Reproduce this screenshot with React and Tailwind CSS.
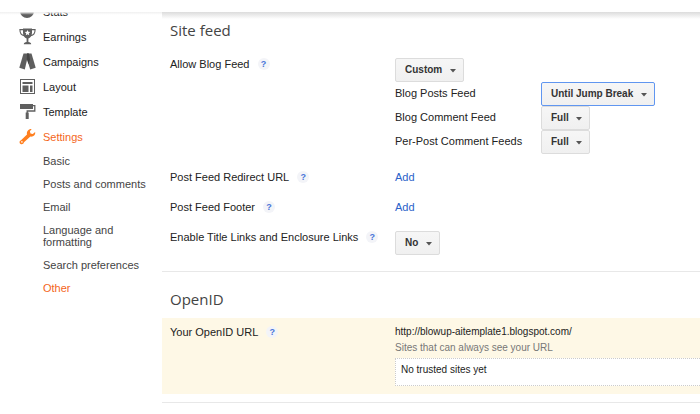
import React from "react";

const stroke = "#5f5f5f";

function StatsIcon() {
  return (
    <svg viewBox="0 0 17 17" className="h-[17px] w-[17px]" aria-hidden="true">
      <circle cx="8" cy="8" r="7" fill={stroke} />
    </svg>
  );
}

function TrophyIcon() {
  return (
    <svg viewBox="0 0 17 17" className="h-[17px] w-[17px]" aria-hidden="true">
      <path d="M4 .5h9v4.2c0 3-1.6 5.2-3.6 5.8v3.6c1.6.2 2.8.9 2.8 2.1H4.800c0-1.200 1.200-1.900 2.800-2.100v-3.600C5.600 9.900 4 7.700 4 4.700z" fill={stroke} />
      <path d="M4 1.600H.9c0 3.600 1.500 5.700 4.300 6M13 1.600h3.100c0 3.600-1.500 5.700-4.300 6" fill="none" stroke={stroke} strokeWidth="1.100" />
      <path d="M8.500 2l.8 1.800 2 .2-1.500 1.300.4 2-1.700-1-1.700 1 .4-2L5.700 4l2-.2z" fill="#fff" />
    </svg>
  );
}

function CampaignsIcon() {
  return (
    <svg viewBox="0 0 17 17" className="h-[17px] w-[17px]" aria-hidden="true">
      <path d="M4.500.5h5L5.800 16.500.3 14.800z" fill="#5f5f5f" />
      <path d="M8 .5h4.500l4.200 14.300-5.500 1.700L7.800 5z" fill="#5f5f5f" />
      <path d="M8 .5h2l1 6-1.500 5L7.800 6z" fill="#444" />
    </svg>
  );
}

function LayoutIcon() {
  return (
    <svg viewBox="0 0 17 17" className="h-[17px] w-[17px]" aria-hidden="true">
      <rect x="1.500" y="1.500" width="14" height="14" fill="#fff" stroke={stroke} />
      <path d="M3.500 4h10v2h-10zM3.500 7.500h6V14h-6zM11 7.500h2.500V14H11z" fill={stroke} />
    </svg>
  );
}

function RollerIcon() {
  return (
    <svg viewBox="0 0 17 17" className="h-[17px] w-[17px]" aria-hidden="true">
      <rect x="1" y="1" width="13" height="5" fill={stroke} />
      <path d="M14 2.700h1.800V8H8.200v3" fill="none" stroke={stroke} strokeWidth="1.300" />
      <rect x="6.700" y="9.500" width="3" height="6.500" fill={stroke} />
    </svg>
  );
}

function WrenchIcon() {
  return (
    <svg viewBox="0 0 17 17" className="h-[17px] w-[17px]" aria-hidden="true">
      <path
        d="M12.700.9 10.900 3.300l.6 2.300 2.300.4 2.300-1.900c.6 2.500-1.300 4.800-4.700 4.500L5 14.200c-.3 1.600-2 2.500-3.400 1.700s-1.600-3 .4-3.700l6-5.600C7.300 3.400 9.500.6 12.700.9z"
        fill="#ff7f1f"
      />
      <circle cx="2.900" cy="13.900" r=".8" fill="#fff" />
    </svg>
  );
}

const navItems = [
  { label: "Stats", Icon: StatsIcon },
  { label: "Earnings", Icon: TrophyIcon },
  { label: "Campaigns", Icon: CampaignsIcon },
  { label: "Layout", Icon: LayoutIcon },
  { label: "Template", Icon: RollerIcon },
  { label: "Settings", Icon: WrenchIcon, active: true },
];

const subItems = ["Basic", "Posts and comments", "Email", "Language and formatting", "Search preferences", "Other"];

function Sidebar() {
  return (
    <nav className="-mt-px w-[162px] shrink-0">
      <ul>
        {navItems.map(({ label, Icon, active }) => (
          <li key={label}>
            <a href="#" className={`flex h-[25px] items-center gap-[7px] pl-[19px] ${active ? "text-[#f4661b]" : "text-[#222]"}`}>
              <Icon />
              {label}
            </a>
          </li>
        ))}
      </ul>
      <ul className="flex flex-col gap-[11px] pt-[6px] pr-3 pl-[43px] leading-[12px]">
        {subItems.map((label) => (
          <li key={label}>
            <a href="#" className={`block ${label === "Other" ? "text-[#f4661b]" : "text-[#444]"}`}>
              {label}
            </a>
          </li>
        ))}
      </ul>
    </nav>
  );
}

function Help() {
  return (
    <button type="button" aria-label="Help" className="h-3 w-3 shrink-0 rounded-full bg-[#f3f4f8] text-center text-[9px] leading-3 font-bold text-[#4a74d8]">
      ?
    </button>
  );
}

function Picker({ id, label, value, focused }) {
  return (
    <span className="relative inline-flex">
      <select
        id={id}
        aria-label={label}
        defaultValue={value}
        className={`h-6 appearance-none rounded-[2px] border bg-linear-to-b from-[#f6f6f6] to-[#f0f0f0] pr-5 pl-[9px] text-[10px] font-bold text-[#333] outline-none ${focused ? "border-[#6096f0]" : "border-[#dcdcdc]"}`}
      >
        <option>{value}</option>
      </select>
      <svg viewBox="0 0 6 4" className="pointer-events-none absolute top-[11px] right-2 h-1 w-1.5" aria-hidden="true">
        <path d="M0 0h6L3 3.500z" fill="#555" />
      </svg>
    </span>
  );
}

function Row({ label, htmlFor, className = "", children }) {
  return (
    <div className={`flex items-start pl-2 ${className}`}>
      <div className="flex w-[225px] shrink-0 items-center gap-2 whitespace-nowrap">
        {htmlFor ? <label htmlFor={htmlFor}>{label}</label> : <span>{label}</span>}
        <Help />
      </div>
      <div className="min-w-0 flex-1">{children}</div>
    </div>
  );
}

const feeds = [
  { id: "posts", label: "Blog Posts Feed", value: "Until Jump Break", focused: true },
  { id: "comments", label: "Blog Comment Feed", value: "Full" },
  { id: "per-post", label: "Per-Post Comment Feeds", value: "Full" },
];

export default function App() {
  return (
    <div className="relative min-h-screen overflow-hidden bg-white font-['Liberation_Sans',Arial,sans-serif] text-[11px] leading-4 text-[#222]">
      <header className="absolute inset-x-0 top-0 z-10">
        <div className="h-3 bg-white" />
        <div className="flex h-[7px]">
          <div className="w-[162px] bg-linear-to-b from-[#f0f0f0] to-transparent to-40%" />
          <div className="flex-1 bg-linear-to-b from-[#dcdcdc] to-transparent" />
        </div>
      </header>

      <div className="flex">
        <Sidebar />
        <main className="min-w-0 flex-1 pt-[18px]">
          <section className="border-b border-[#e8e8e8] pb-4">
            <h2 className="pl-2 font-['Open_Sans',sans-serif] text-[15px] leading-6 text-[#444]">Site feed</h2>
            <div className="flex flex-col gap-[14px] pt-[14px]">
              <Row label="Allow Blog Feed" htmlFor="allow" className="pb-px">
                <div className="flex pt-[2px]">
                  <Picker id="allow" value="Custom" />
                </div>
                {feeds.map((f) => (
                  <div key={f.id} className="flex h-6 items-start">
                    <label htmlFor={f.id} className="w-[146px] pt-[3px]">
                      {f.label}
                    </label>
                    <Picker id={f.id} value={f.value} focused={f.focused} />
                  </div>
                ))}
              </Row>
              <Row label="Post Feed Redirect URL">
                <a href="#" className="text-[#2a62c9]">Add</a>
              </Row>
              <Row label="Post Feed Footer">
                <a href="#" className="text-[#2a62c9]">Add</a>
              </Row>
              <Row label="Enable Title Links and Enclosure Links" htmlFor="enclosure">
                <div className="flex pt-[2px]">
                  <Picker id="enclosure" value="No" />
                </div>
              </Row>
            </div>
          </section>

          <section className="border-b border-[#e8e8e8] pt-[15px] pb-2">
            <h2 className="pl-2 font-['Open_Sans',sans-serif] text-[15px] leading-6 text-[#444]">OpenID</h2>
            <Row label="Your OpenID URL" className="mt-[7px] bg-[#fef8e6] pt-[6px] pb-2">
              <p className="text-[10px]">http://blowup-aitemplate1.blogspot.com/</p>
              <p className="text-[10px] text-[#777]">Sites that can always see your URL</p>
              <div className="mt-[2px] h-7 border border-r-0 border-dotted border-[#ccc] bg-white px-[5px] py-[3px] text-[10px]">No trusted sites yet</div>
            </Row>
          </section>
        </main>
      </div>
    </div>
  );
}
